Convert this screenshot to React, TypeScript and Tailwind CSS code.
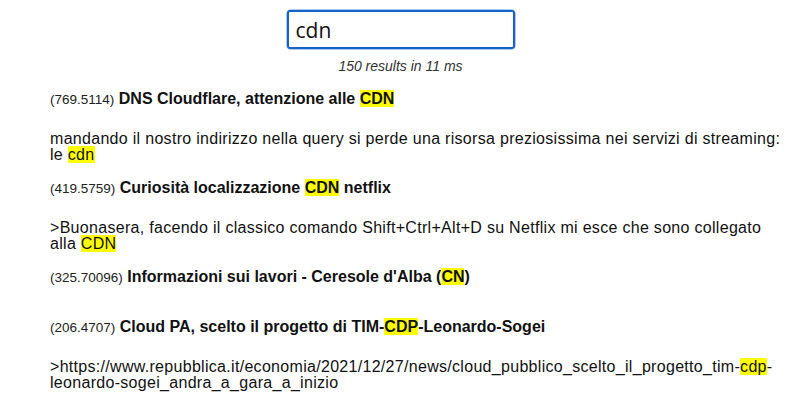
import React from 'react';

type Part = string | { hl: string };

type Result = {
  score: string;
  title: Part[];
  body: Part[];
};

const results: Result[] = [
  {
    score: '769.5114',
    title: ['DNS Cloudflare, attenzione alle ', { hl: 'CDN' }],
    body: [
      'mandando il nostro indirizzo nella query si perde una risorsa preziosissima nei servizi di streaming: le ',
      { hl: 'cdn' },
    ],
  },
  {
    score: '419.5759',
    title: ['Curiosità localizzazione ', { hl: 'CDN' }, ' netflix'],
    body: [
      '>Buonasera, facendo il classico comando Shift+Ctrl+Alt+D su Netflix mi esce che sono collegato alla ',
      { hl: 'CDN' },
    ],
  },
  {
    score: '325.70096',
    title: ["Informazioni sui lavori - Ceresole d'Alba (", { hl: 'CN' }, ')'],
    body: [],
  },
  {
    score: '206.4707',
    title: ['Cloud PA, scelto il progetto di TIM-', { hl: 'CDP' }, '-Leonardo-Sogei'],
    body: [
      '>https://www.repubblica.it/economia/2021/12/27/news/cloud_pubblico_scelto_il_progetto_tim-',
      { hl: 'cdp' },
      '-leonardo-sogei_andra_a_gara_a_inizio',
    ],
  },
];

function Text({ parts }: { parts: Part[] }) {
  return (
    <>
      {parts.map((p, i) =>
        typeof p === 'string' ? (
          <React.Fragment key={i}>{p}</React.Fragment>
        ) : (
          <mark key={i} className="bg-[#ffff00] text-inherit">
            {p.hl}
          </mark>
        )
      )}
    </>
  );
}

export default function App() {
  return (
    <div className="w-[787px] h-[403px] bg-white overflow-hidden font-['Liberation_Sans',Arial,sans-serif] text-[#111]">
      {/* Search box */}
      <div className="flex flex-col items-center pt-[9px] pl-[14px]">
        <div className="rounded-[5px] border border-[#a9cbf0]">
          <input
            defaultValue="cdn"
            className="block w-[228px] h-[39px] rounded-[3px] border-2 border-[#1762c6] px-[7px] text-[21px] text-[#111] outline-none font-['Open_Sans','Noto_Sans',sans-serif]"
          />
        </div>
        <div className="mt-[8px] text-[14px] italic text-[#333] leading-4">150 results in 11 ms</div>
      </div>

      {/* Results */}
      <div className="pl-[50px] pr-[4px] pt-[15px] flex flex-col">
        {results.map((r) => (
          <div key={r.score} className="flex flex-col">
            <div className="leading-5 h-5 whitespace-nowrap">
              <span className="text-[13.5px] text-[#222]">({r.score})</span>{' '}
              <span className="text-[16px] font-bold">
                <Text parts={r.title} />
              </span>
            </div>
            {r.body.length > 0 ? (
              <p className="text-[16px] tracking-[0.3px] leading-4 mt-[22px] mb-[15px]">
                <Text parts={r.body} />
              </p>
            ) : (
              <div className="h-[30px]" />
            )}
          </div>
        ))}
      </div>
    </div>
  );
}
